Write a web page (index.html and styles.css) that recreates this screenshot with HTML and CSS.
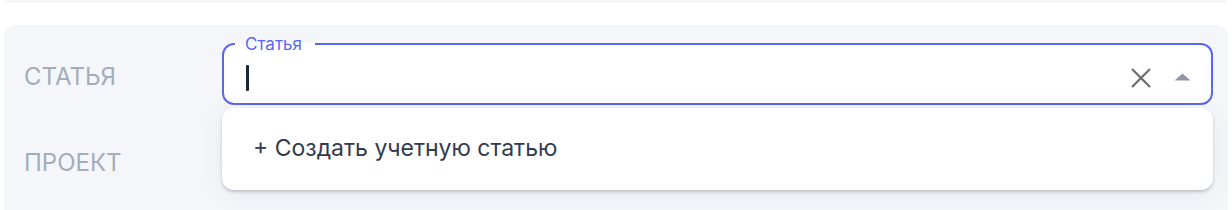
FILE: index.html
```html
<!DOCTYPE html>
<html lang="ru">
<head>
    <meta charset="UTF-8">
    <title>Статья</title>
    <link rel="stylesheet" href="styles.css">
</head>
<body>
    <div class="prev-card"></div>
    <div class="panel">
        <div class="row row-first">
            <div class="row-label">Статья</div>
            <div class="select">
                <fieldset class="select-field">
                    <legend>Статья</legend>
                    <span class="caret"></span>
                    <div class="select-icons">
                        <svg class="icon-clear" width="22" height="22" viewBox="0 0 22 22">
                            <path d="M2 2 L20 20 M20 2 L2 20" stroke="currentColor" stroke-width="2.3" fill="none"/>
                        </svg>
                        <svg class="icon-arrow" width="17" height="8" viewBox="0 0 17 8">
                            <path d="M0.5 7.5 L8.5 0.5 L16.5 7.5 Z" fill="currentColor"/>
                        </svg>
                    </div>
                </fieldset>
                <div class="dropdown">
                    <div class="dropdown-item">+ Создать учетную статью</div>
                </div>
            </div>
        </div>
        <div class="row">
            <div class="row-label">Проект</div>
            <div class="row-value"></div>
        </div>
    </div>
</body>
</html>
```

FILE: styles.css
```css
body {
    margin: 0;
    font-family: 'Inter', 'Noto Sans', sans-serif;
    background-color: #fff;
    height: 210px;
    overflow: hidden;
}

.prev-card {
    height: 3px;
    margin: 0 4px;
    background-color: #f5f6fa;
    border-radius: 0 0 4px 4px;
}

.panel {
    margin: 22px 4px 0;
    padding: 11px 15px 30px 20px;
    background-color: #f5f6fa;
    border-radius: 12px;
}

.row {
    display: flex;
    align-items: center;
    height: 60px;
}

.row-first {
    height: auto;
    margin-bottom: 27px;
}

.row-first .row-label {
    padding-top: 11px;
}

.row-label {
    width: 198px;
    flex-shrink: 0;
    text-transform: uppercase;
    font-size: 24px;
    color: #a3adbb;
}

.select {
    position: relative;
    flex: 1;
}

.select-field {
    margin: 0;
    height: 69px;
    box-sizing: border-box;
    border: 2px solid #5a67f2;
    border-radius: 12px;
    background-color: #fff;
    padding: 0 20px 0 22px;
    display: flex;
    align-items: center;
}

.select-field legend {
    margin-left: -11px;
    padding: 0 13px 0 10px;
    font-size: 17px;
    line-height: 16px;
    color: #5a67f2;
}

.caret {
    width: 3px;
    height: 26px;
    border-radius: 1px;
    background-color: #1e2838;
}

.select-icons {
    margin-left: auto;
    display: flex;
    align-items: center;
    gap: 22px;
}

.icon-clear {
    color: #6e6e6e;
}

.icon-arrow {
    color: #8f97a6;
    margin-top: -2px;
}

.dropdown {
    position: absolute;
    left: 0;
    right: 0;
    top: 72px;
    height: 82px;
    box-sizing: border-box;
    background-color: #fff;
    border-radius: 12px;
    box-shadow: 0 2px 3px rgba(60, 64, 90, 0.25), 0 4px 24px rgba(60, 64, 90, 0.08);
    padding: 0 31px;
    display: flex;
    align-items: center;
}

.dropdown-item {
    font-size: 23px;
    color: #323a4f;
    margin-top: -2px;
}
```
